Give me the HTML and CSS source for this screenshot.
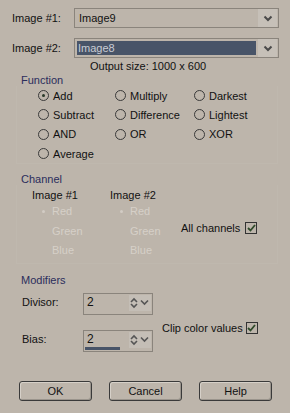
FILE: index.html
```html
<!DOCTYPE html>
<html lang="en">
  <head>
    <meta charset="UTF-8" />
    <title>Arithmetic</title>
    <link rel="stylesheet" href="styles.css">
  </head>
  <body>
    <div class="dialog">
      <div class="pick-row">
        <span class="pick-label">Image #1:</span>
        <div class="combo">
          <span class="combo-value">Image9</span>
          <span class="combo-btn"><svg width="10" height="7" viewBox="0 0 10 7"><path d="M1.5 1.5 L5 5 L8.5 1.5" fill="none" stroke="#4a4a4a" stroke-width="2"/></svg></span>
        </div>
      </div>
      <div class="pick-row second">
        <span class="pick-label">Image #2:</span>
        <div class="combo">
          <span class="combo-value selected">Image8</span>
          <span class="combo-btn"><svg width="10" height="7" viewBox="0 0 10 7"><path d="M1.5 1.5 L5 5 L8.5 1.5" fill="none" stroke="#4a4a4a" stroke-width="2"/></svg></span>
        </div>
      </div>
      <div class="output">Output size: 1000 x 600</div>

      <div class="group func-group">
        <div class="group-title">Function</div>
        <div class="radio-grid">
          <label class="radio"><span class="dot checked"></span>Add</label>
          <label class="radio"><span class="dot"></span>Multiply</label>
          <label class="radio"><span class="dot"></span>Darkest</label>
          <label class="radio"><span class="dot"></span>Subtract</label>
          <label class="radio"><span class="dot"></span>Difference</label>
          <label class="radio"><span class="dot"></span>Lightest</label>
          <label class="radio"><span class="dot"></span>AND</label>
          <label class="radio"><span class="dot"></span>OR</label>
          <label class="radio"><span class="dot"></span>XOR</label>
          <label class="radio"><span class="dot"></span>Average</label>
        </div>
      </div>

      <div class="group chan-group">
        <div class="group-title">Channel</div>
        <div class="chan-body">
          <div class="chan-col">
            <div class="chan-head">Image #1</div>
            <div class="chan-item"><span class="mini-dot"></span>Red</div>
            <div class="chan-item">Green</div>
            <div class="chan-item">Blue</div>
          </div>
          <div class="chan-col">
            <div class="chan-head">Image #2</div>
            <div class="chan-item"><span class="mini-dot"></span>Red</div>
            <div class="chan-item">Green</div>
            <div class="chan-item">Blue</div>
          </div>
          <div class="all-chan">
            All channels
            <span class="check"><svg width="9" height="8" viewBox="0 0 9 8"><path d="M1 4 L3.5 6.5 L8 1" fill="none" stroke="#2f4a2a" stroke-width="1.8"/></svg></span>
          </div>
        </div>
      </div>

      <div class="group mod-group">
        <div class="group-title">Modifiers</div>
        <div class="mod-body">
          <div class="mod-fields">
            <div class="mod-row">
              <span class="mod-label">Divisor:</span>
              <div class="spin">
                <span class="spin-value">2</span>
                <span class="spin-arrows">
                  <svg width="10" height="12" viewBox="0 0 10 12"><path d="M2 5 L5 2 L8 5 M2 7 L5 10 L8 7" fill="none" stroke="#555" stroke-width="1.6"/></svg>
                  <svg width="9" height="7" viewBox="0 0 9 7"><path d="M1 1.5 L4.5 5 L8 1.5" fill="none" stroke="#555" stroke-width="1.6"/></svg>
                </span>
              </div>
            </div>
            <div class="mod-row bias">
              <span class="mod-label">Bias:</span>
              <div class="spin">
                <span class="spin-value">2</span>
                <span class="spin-arrows">
                  <svg width="10" height="12" viewBox="0 0 10 12"><path d="M2 5 L5 2 L8 5 M2 7 L5 10 L8 7" fill="none" stroke="#555" stroke-width="1.6"/></svg>
                  <svg width="9" height="7" viewBox="0 0 9 7"><path d="M1 1.5 L4.5 5 L8 1.5" fill="none" stroke="#555" stroke-width="1.6"/></svg>
                </span>
                <span class="spin-bar" style="width: 35px"></span>
              </div>
            </div>
          </div>
          <div class="clip">
            Clip color values
            <span class="check"><svg width="9" height="8" viewBox="0 0 9 8"><path d="M1 4 L3.5 6.5 L8 1" fill="none" stroke="#2f4a2a" stroke-width="1.8"/></svg></span>
          </div>
        </div>
      </div>

      <div class="buttons">
        <button>OK</button>
        <button>Cancel</button>
        <button>Help</button>
      </div>
    </div>
  </body>
</html>
```

FILE: styles.css
```css
body {
  margin: 0;
  background: #bdb5ab;
  font-family: "Liberation Sans", Arial, sans-serif;
  font-size: 11px;
  color: #111;
}
.dialog {
  width: 290px;
  height: 413px;
  padding-top: 8px;
  box-sizing: border-box;
  white-space: nowrap;
}
.pick-row {
  display: flex;
  align-items: center;
  height: 20px;
  padding-left: 12px;
}
.pick-row.second {
  margin-top: 10px;
}
.pick-label {
  width: 62px;
}
.combo {
  display: flex;
  width: 205px;
  height: 20px;
  box-sizing: border-box;
  border: 1px solid #8a847c;
  padding: 2px 1px 2px 2px;
}
.combo-value {
  flex: 1;
  padding-left: 2px;
  line-height: 14px;
}
.combo-value.selected {
  background: #485468;
  color: #c8ccd4;
  margin-right: 2px;
  padding-left: 1px;
}
.combo-btn {
  width: 19px;
  display: flex;
  align-items: center;
  justify-content: center;
  background: #c6c0b8;
  margin: -2px 0;
}
.output {
  margin-top: 2px;
  padding-left: 90px;
  line-height: 12px;
}
.group {
  margin: 0 12px 0 16px;
}
.group-title {
  color: #2b2d5c;
  line-height: 12px;
  padding-left: 5px;
}
.func-group {
  margin-top: 2px;
}
.radio-grid {
  display: grid;
  grid-template-columns: 77px 79px auto;
  grid-auto-rows: 19.3px;
  padding-left: 21px;
  border: 1px solid #bfb8ae;
  border-top: none;
}
.radio {
  display: flex;
  align-items: center;
}
.dot {
  width: 11px;
  height: 11px;
  box-sizing: border-box;
  border: 1px solid #3a3a3a;
  border-radius: 50%;
  margin-right: 4px;
  display: flex;
  align-items: center;
  justify-content: center;
}
.dot.checked::after {
  content: "";
  width: 3px;
  height: 3px;
  border-radius: 50%;
  background: #2a3a2a;
}
.chan-group {
  margin-top: 9px;
}
.chan-body {
  display: grid;
  grid-template-columns: 78px 71px auto;
  padding: 4px 0 2px 15px;
  border: 1px solid #bfb8ae;
  border-top: none;
}
.chan-head {
  line-height: 12px;
}
.chan-item {
  position: relative;
  height: 19.5px;
  line-height: 19.5px;
  padding-left: 20px;
  color: #d6d0c8;
}
.chan-head + .chan-item {
  margin-top: 1px;
}
.mini-dot {
  position: absolute;
  left: 10px;
  top: 8px;
  width: 3px;
  height: 3px;
  border-radius: 50%;
  background: #d2ccc4;
}
.all-chan,
.clip {
  display: flex;
  align-items: center;
}
.all-chan {
  margin-top: 33px;
  align-self: start;
}
.check {
  width: 12px;
  height: 12px;
  box-sizing: border-box;
  border: 1px solid #333;
  margin-left: 5px;
  display: flex;
  align-items: center;
  justify-content: center;
}
.clip .check {
  margin-left: 3px;
}
.mod-group {
  margin-top: 10px;
}
.mod-body {
  display: flex;
  padding-top: 7px;
}
.mod-row {
  display: flex;
  align-items: flex-start;
  height: 22px;
  padding-left: 6px;
}
.mod-row.bias {
  margin-top: 15px;
}
.mod-label {
  width: 61px;
  line-height: 18px;
}
.spin {
  position: relative;
  display: flex;
  align-items: flex-start;
  width: 70px;
  height: 22px;
  box-sizing: border-box;
  border: 1px solid #8a847c;
  font-size: 12px;
  padding-top: 1px;
}
.spin-value {
  flex: 1;
  padding-left: 3px;
  line-height: 14px;
}
.spin-arrows {
  display: flex;
  align-items: center;
  gap: 1px;
  padding-right: 2px;
  background: #c4beb6;
  height: 16px;
  margin-right: 1px;
}
.spin-bar {
  position: absolute;
  left: 1px;
  bottom: 1px;
  height: 3px;
  background: #485468;
}
.clip {
  margin-left: 9px;
  margin-top: 29px;
  align-self: flex-start;
}
.buttons {
  display: flex;
  gap: 17px;
  padding-left: 19px;
  margin-top: 29px;
}
button {
  width: 73px;
  height: 20px;
  border: 1px solid #3a3a3a;
  border-radius: 3px;
  background: #bdb5ab;
  box-shadow: inset 1px 1px 0 #d6d0c8, inset -1px -1px 0 #9a948c;
  font-family: "Liberation Sans", Arial, sans-serif;
  font-size: 11px;
  color: #111;
  padding: 0;
}
```
